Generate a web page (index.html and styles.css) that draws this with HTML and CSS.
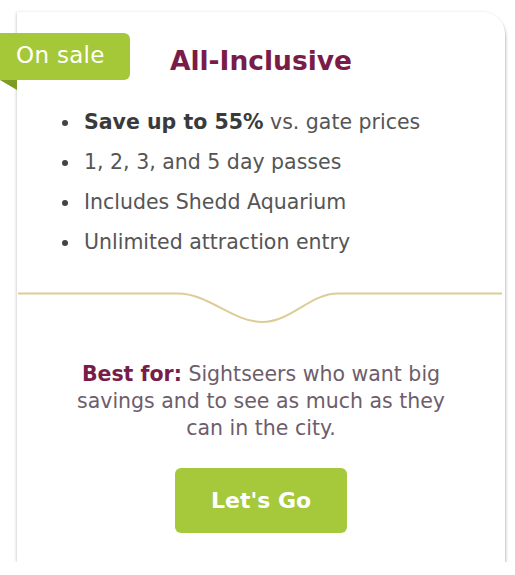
FILE: index.html
```html
<!DOCTYPE html>
<html>
<head>
<meta charset="utf-8">
<link rel="stylesheet" href="styles.css">
</head>
<body>
<div class="page">
  <div class="card">
    <div class="badge">On sale</div>
    <h2 class="title">All-Inclusive</h2>
    <ul class="features">
      <li><b>Save up to 55%</b> vs. gate prices</li>
      <li>1, 2, 3, and 5 day passes</li>
      <li>Includes Shedd Aquarium</li>
      <li>Unlimited attraction entry</li>
    </ul>
    <svg class="divider" width="484" height="36" viewBox="0 0 484 36">
      <path d="M0 3.5 H160 C190 3.5 215 32 244 32 C273 32 292 3.5 320 3.5 H484" fill="none" stroke="#dccd98" stroke-width="2"/>
    </svg>
    <p class="best"><span class="best-label">Best for:</span> Sightseers who want big savings and to see as much as they can in the city.</p>
    <div class="actions"><a class="btn" href="#">Let's Go</a></div>
  </div>
</div>
</body>
</html>
```
FILE: styles.css
```css
html, body {
  margin: 0;
  padding: 0;
  background: #ffffff;
}
.page {
  padding: 12px 10px 0 17px;
}
.card {
  position: relative;
  width: 488px;
  height: 550px;
  box-sizing: border-box;
  background: #fff;
  border-radius: 0 22px 0 0;
  box-shadow: 1px 3px 3px rgba(0,0,0,0.24), -1px 0 3px rgba(0,0,0,0.12);
  padding-top: 33px;
  font-family: "DejaVu Sans", "Noto Sans", sans-serif;
}
.badge {
  position: absolute;
  left: -17px;
  top: 21px;
  width: 130px;
  height: 47px;
  box-sizing: border-box;
  background: #a5c838;
  color: #fff;
  border-radius: 0 6px 6px 0;
  font-size: 23px;
  font-weight: 400;
  line-height: 45px;
  padding-left: 16px;
  letter-spacing: 0.3px;
}
.badge::after {
  content: "";
  position: absolute;
  left: 0;
  top: 47px;
  width: 0;
  height: 0;
  border-top: 10px solid #7f9c22;
  border-left: 17px solid transparent;
}
.title {
  margin: 0;
  text-align: center;
  font-size: 26.5px;
  line-height: 32px;
  font-weight: 700;
  color: #7a1c48;
}
.features {
  list-style: none;
  margin: 25px 0 0 0;
  padding: 0 0 0 67px;
  font-size: 20.5px;
  line-height: 40px;
  color: #555;
}
.features li {
  position: relative;
}
.features li::before {
  content: "";
  position: absolute;
  left: -22px;
  top: 18px;
  width: 6px;
  height: 6px;
  border-radius: 50%;
  background: #444;
}
.features b {
  color: #3a3a3a;
  font-weight: 700;
}
.divider {
  display: block;
  margin: 28px 0 0 1px;
}
.best {
  margin: 35px 0 0 0;
  padding: 0 48px;
  text-align: center;
  font-size: 20.5px;
  line-height: 27px;
  color: #6e5d6b;
}
.best-label {
  font-weight: 700;
  color: #7a1c48;
}
.actions {
  display: flex;
  justify-content: center;
  margin-top: 26px;
}
.btn {
  display: block;
  width: 172px;
  height: 65px;
  line-height: 65px;
  text-align: center;
  background: #a5c93a;
  color: #fff;
  border-radius: 6px;
  font-size: 22px;
  font-weight: 700;
  text-decoration: none;
}
```
